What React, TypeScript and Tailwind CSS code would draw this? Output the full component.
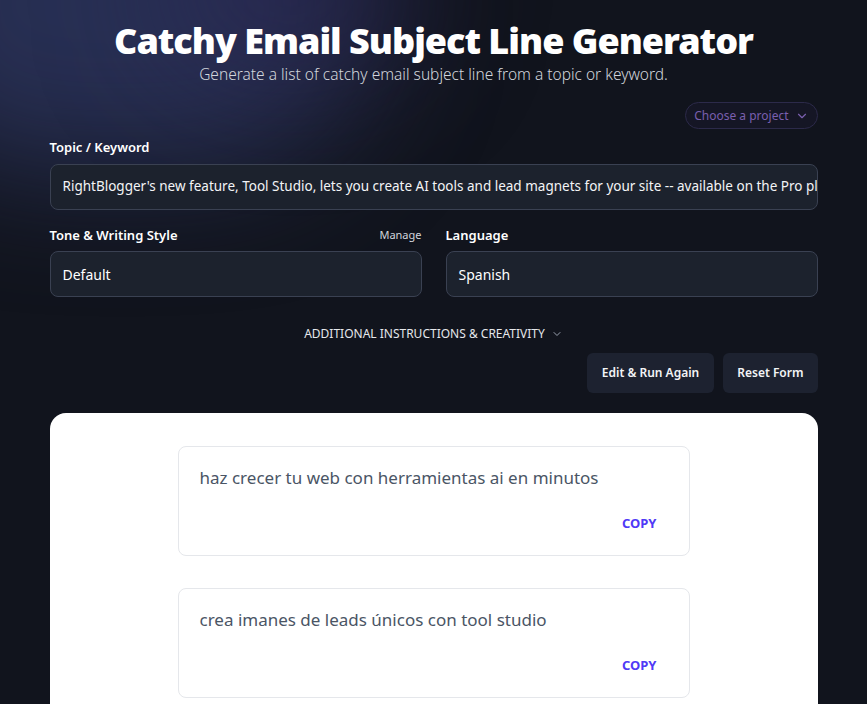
import React from 'react';
import { ChevronDown } from 'lucide-react';

const results = [
  'haz crecer tu web con herramientas ai en minutos',
  'crea imanes de leads únicos con tool studio',
];

const App = () => {
  return (
    <div
      className="min-h-screen bg-[#11141d] text-white relative overflow-hidden"
      style={{ fontFamily: '"Noto Sans", "Open Sans", sans-serif' }}
    >
      {/* Glow behind the header */}
      <div className="absolute -top-40 -left-32 w-[500px] h-[330px] rounded-full bg-[#3a4580]/55 blur-3xl pointer-events-none"></div>
      <div className="absolute -top-24 left-40 w-[260px] h-[170px] rounded-full bg-[#2a2350]/45 blur-3xl pointer-events-none"></div>

      <div className="relative max-w-3xl mx-auto pt-[18px] pb-10">
        {/* Header */}
        <div className="text-center">
          <h1 className="text-[36px] leading-[46px] font-black tracking-[-1px]">Catchy Email Subject Line Generator</h1>
          <p className="text-[15.5px] leading-5 text-gray-300 font-light">
            Generate a list of catchy email subject line from a topic or keyword.
          </p>
        </div>

        <div className="flex justify-end mt-[18px]">
          <button className="flex items-center gap-1.5 h-[27px] px-2 rounded-full border border-[#2c2a4a] bg-[#151625] text-[12px] text-[#7a5fae]">
            Choose a project
            <ChevronDown className="w-3.5 h-3.5" />
          </button>
        </div>

        {/* Form */}
        <div className="mt-[9px]">
          <label className="block text-[13px] font-semibold mb-[6px]">Topic / Keyword</label>
          <div className="h-[46px] rounded-lg border border-[#3a4152] bg-[#1c222d] px-3 flex items-center overflow-hidden">
            <span className="text-[13.5px] whitespace-nowrap text-gray-100">
              RightBlogger's new feature, Tool Studio, lets you create AI tools and lead magnets for your site -- available on the Pro plan
            </span>
          </div>
        </div>

        <div className="grid grid-cols-2 gap-6 mt-[16px]">
          <div>
            <div className="flex items-center justify-between mb-[6px]">
              <label className="text-[13px] font-semibold">Tone &amp; Writing Style</label>
              <span className="text-[11px] text-gray-300">Manage</span>
            </div>
            <div className="h-[46px] rounded-lg border border-[#3a4152] bg-[#1c222d] px-3 flex items-center text-[14px]">
              Default
            </div>
          </div>
          <div>
            <div className="flex items-center mb-[6px]">
              <label className="text-[13px] font-semibold">Language</label>
            </div>
            <div className="h-[46px] rounded-lg border border-[#3a4152] bg-[#1c222d] px-3 flex items-center text-[14px]">
              Spanish
            </div>
          </div>
        </div>

        <div className="flex justify-center mt-[28px]">
          <button className="flex items-center gap-1.5 text-[12px] text-gray-200">
            ADDITIONAL INSTRUCTIONS &amp; CREATIVITY
            <ChevronDown className="w-3 h-3 text-gray-400" />
          </button>
        </div>

        <div className="flex justify-end gap-[9px] mt-[10px]">
          <button className="h-10 px-[15px] rounded-md bg-[#1d2230] text-[12px] font-semibold text-gray-100">
            Edit &amp; Run Again
          </button>
          <button className="h-10 px-[14px] rounded-md bg-[#1d2230] text-[12px] font-semibold text-gray-100">
            Reset Form
          </button>
        </div>

        {/* Results */}
        <div className="mt-5 bg-white rounded-2xl pt-[33px] pb-8">
          <div className="max-w-lg mx-auto flex flex-col gap-[32px]">
            {results.map((line, i) => (
              <div key={i} className="h-[110px] rounded-lg border border-gray-200 px-[21px] pt-[18px]">
                <p className="text-[17px] text-gray-600">{line}</p>
                <div className="flex justify-end mt-[23px] pr-[11px]">
                  <button className="text-[13px] font-bold text-indigo-600">COPY</button>
                </div>
              </div>
            ))}
          </div>
        </div>
      </div>
    </div>
  );
};

export default App;
